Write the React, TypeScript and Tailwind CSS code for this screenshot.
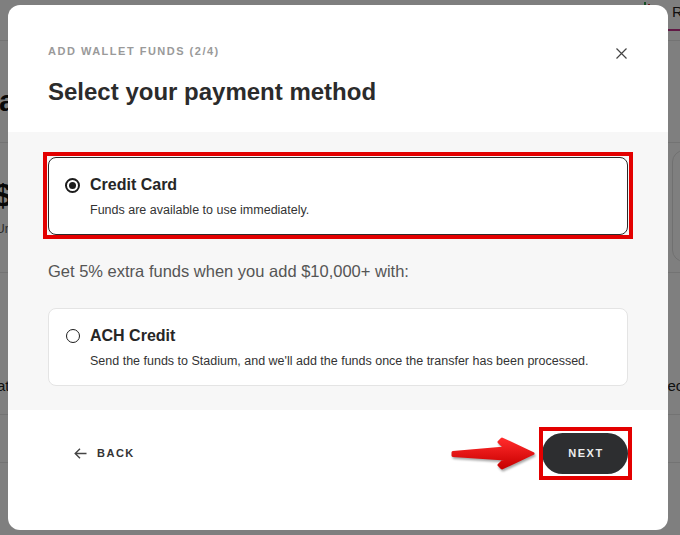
import React from "react";

const font = { fontFamily: '"Liberation Sans", Arial, sans-serif' };

const Radio: React.FC<{ checked?: boolean }> = ({ checked }) =>
  checked ? (
    <span className="flex h-[15px] w-[15px] items-center justify-center rounded-full border-2 border-[#1c1c1c]">
      <span className="h-[7px] w-[7px] rounded-full bg-[#1c1c1c]" />
    </span>
  ) : (
    <span className="h-[14px] w-[14px] rounded-full border-[1.5px] border-[#1c1c1c]" />
  );

const Option: React.FC<{
  title: string;
  text: string;
  checked?: boolean;
}> = ({ title, text, checked }) => (
  <div
    className={`rounded-[8px] border bg-white pl-4 pr-4 pt-[15px] pb-[16px] ${
      checked ? "border-[#2b2b2b]" : "border-[#e4e4e4]"
    }`}
  >
    <div className="flex h-6 items-center gap-[10px]">
      <div className="flex w-[15px] justify-center">
        <Radio checked={checked} />
      </div>
      <span className="text-[16px] font-bold text-[#262626]">{title}</span>
    </div>
    <p className="mt-[5px] pl-[25px] text-[12.5px] leading-4 text-[#333]">{text}</p>
  </div>
);

// the page behind the dialog, only slivers of it show
const BackPage: React.FC = () => (
  <div className="h-[535px] w-[680px] overflow-hidden bg-white">
    <div className="flex h-[41px] border-b border-[#e6e6e6] whitespace-nowrap">
      <div className="w-[640px] shrink-0" />
      <div className="flex w-[12px] shrink-0 items-start gap-[2px] pt-[2px]">
        <span className="mt-[3px] h-[6px] w-[2px] bg-[#2e9e4a]" />
        <span className="h-[9px] w-[2px] bg-[#2e9e4a]" />
        <span className="mt-[2px] h-[7px] w-[2px] bg-[#d23c3c]" />
      </div>
      <div className="ml-[3px] h-[31px] shrink-0 border-b-2 border-[#c2338a] pl-[17px] pt-[2px] text-[15px] leading-5 text-[#222]">
        Research
      </div>
    </div>
    <div className="h-[102px] border-b border-[#e6e6e6] pt-[44px]">
      <div className="-ml-[1px] text-[30px] font-bold leading-8 text-[#111]">a</div>
    </div>
    <div className="flex h-[130px] border-b border-[#e6e6e6]">
      <div className="w-[20px] shrink-0 pt-[34px]">
        <div className="-ml-[6px] text-[32px] font-bold leading-9 text-[#111]">$</div>
        <div className="-ml-[4px] mt-[8px] text-[12px] leading-4 text-[#555]">Un</div>
      </div>
      <div className="ml-[652px] mt-[7px] h-[112px] w-[60px] shrink-0 rounded-[12px] border border-[#e0e0e0]" />
    </div>
    <div className="flex h-[142px] items-end border-b border-[#e6e6e6] pb-[17px] text-[15px] text-[#222]">
      <span className="-ml-[3px] shrink-0">at</span>
      <span className="ml-[658px] shrink-0 whitespace-nowrap">ected</span>
    </div>
    <div className="h-[48px] border-b border-[#e6e6e6]" />
  </div>
);

const RedArrow: React.FC = () => (
  <svg
    width="90"
    height="40"
    viewBox="0 0 90 40"
    className="drop-shadow-[1px_2px_1px_rgba(0,0,0,0.35)]"
  >
    <defs>
      <linearGradient id="ra" x1="0" y1="0" x2="0" y2="1">
        <stop offset="0" stopColor="#ff2a2a" />
        <stop offset="1" stopColor="#c80000" />
      </linearGradient>
    </defs>
    <polygon
      points="3,17.5 55,13 49,7 52,4 83,18.5 52,33 49,30 55,24 3,20.5"
      fill="url(#ra)"
      stroke="url(#ra)"
      strokeWidth="3"
      strokeLinejoin="round"
    />
  </svg>
);

const App: React.FC = () => {
  return (
    <div className="relative h-[535px] w-[680px] overflow-hidden" style={font}>
      <BackPage />
      <div className="absolute inset-0 bg-black/50" />

      <div className="absolute inset-0">
        <div className="ml-[8px] mt-[5px] flex h-[525px] w-[660px] flex-col overflow-hidden rounded-[12px] bg-white">
          {/* header */}
          <div className="flex items-start justify-between pl-[40px] pr-[40px] pt-[38px] pb-[24px]">
            <div>
              <div className="text-[11px] font-bold leading-4 tracking-[1.5px] text-[#9a9a9a]">
                ADD WALLET FUNDS (2/4)
              </div>
              <h2 className="mt-[17px] text-[24px] font-bold leading-8 text-[#2b2b2b]">
                Select your payment method
              </h2>
            </div>
            <button className="mt-[4px] mr-[1px] flex h-[12px] w-[12px] items-center justify-center">
              <svg width="11" height="11" viewBox="0 0 11 11">
                <path d="M0.5 0.5L10.5 10.5M10.5 0.5L0.5 10.5" stroke="#444" strokeWidth="1.2" />
              </svg>
            </button>
          </div>

          {/* options */}
          <div className="bg-[#f7f7f7] px-[40px] pt-[25px] pb-[24px]">
            <div className="relative">
              <Option
                checked
                title="Credit Card"
                text="Funds are available to use immediately."
              />
              <div className="absolute -inset-[5px] -bottom-[4px] border-4 border-[#e30000]" />
            </div>
            <p className="mt-[24px] text-[16.5px] leading-6 text-[#555]">
              Get 5% extra funds when you add $10,000+ with:
            </p>
            <div className="mt-[25px]">
              <Option
                title="ACH Credit"
                text="Send the funds to Stadium, and we'll add the funds once the transfer has been processed."
              />
            </div>
          </div>

          {/* footer */}
          <div className="flex items-center justify-between px-[40px] pt-[23px]">
            <button className="flex items-center gap-[10px] pl-[26px] text-[11px] font-bold tracking-[1.5px] text-[#333]">
              <svg width="13" height="11" viewBox="0 0 13 11">
                <path d="M12.5 5.5H1.2M6 0.8L1.2 5.5L6 10.2" stroke="#444" strokeWidth="1.4" fill="none" />
              </svg>
              BACK
            </button>
            <div className="relative">
              <button className="h-[41px] w-[86px] rounded-full bg-[#2d2e30] pl-[2px] text-[11px] font-bold tracking-[1.5px] text-[#ececec]">
                NEXT
              </button>
              <div className="absolute -left-[3px] -right-[4px] -top-[6px] -bottom-[6px] border-4 border-[#e30000]" />
              <div className="absolute right-full top-[2px] mr-[2px]">
                <RedArrow />
              </div>
            </div>
          </div>
        </div>
      </div>
    </div>
  );
};

export default App;
